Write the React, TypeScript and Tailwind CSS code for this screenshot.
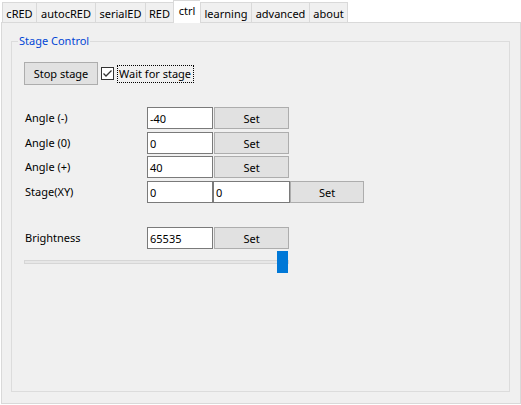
const tabs = [
  { label: "cRED", w: "w-[34px]" },
  { label: "autocRED", w: "w-[59px]" },
  { label: "serialED", w: "w-[50px]" },
  { label: "RED", w: "w-[28px]" },
  { label: "ctrl", w: "w-[27px]", active: true },
  { label: "learning", w: "w-[51px]" },
  { label: "advanced", w: "w-[58px]" },
  { label: "about", w: "w-[39px]", last: true },
];

const Field = ({ value, w = "w-[66px]" }: { value: string; w?: string }) => (
  <div className={`${w} h-[22px] bg-white border border-[#7a7a7a] pl-[2px] flex items-center leading-none`}>
    {value}
  </div>
);

const SetButton = ({ w = "w-[75px]", className = "" }: { w?: string; className?: string }) => (
  <div
    className={`${w} h-[22px] bg-[#e1e1e1] border border-[#adadad] flex items-center justify-center leading-none ${className}`}
  >
    Set
  </div>
);

const Row = ({ label, value, className = "" }: { label: string; value: string; className?: string }) => (
  <div className={`flex items-center h-[22px] ${className}`}>
    <div className="w-[123px] pl-[1px]">{label}</div>
    <Field value={value} />
    <SetButton className="ml-[1px]" />
  </div>
);

export default function App() {
  return (
    <div className="w-[521px] h-[405px] bg-white text-black text-[11px] font-['Noto_Sans',sans-serif] flex flex-col">
      {/* tab strip */}
      <div className="flex items-end h-[22px] pl-[2px]">
        {tabs.map((t) =>
          t.active ? (
            <div
              key={t.label}
              className={`${t.w} h-[23px] -mb-px z-10 bg-white border-l border-t border-[#d9d9d9] flex justify-center pt-[2px] leading-[16px]`}
            >
              {t.label}
            </div>
          ) : (
            <div
              key={t.label}
              className={`${t.w} h-[20px] bg-[#f0f0f0] border-l border-t border-[#d9d9d9] ${
                t.last ? "border-r" : ""
              } flex justify-center pt-[3px] leading-[16px]`}
            >
              {t.label}
            </div>
          )
        )}
      </div>

      {/* tab page */}
      <div className="ml-[1px] w-[520px] h-[382px] bg-[#f0f0f0] border border-[#d9d9d9]">
        <div className="relative ml-[9px] mt-[18px] w-[499px] h-[351px] border border-[#dcdcdc] pl-[12px] pt-[20px]">
          <span className="absolute left-[6px] top-[-9px] px-[1px] bg-[#f0f0f0] text-[#0046d5] leading-[16px]">
            Stage Control
          </span>

          <div className="flex items-center h-[23px]">
            <div className="w-[74px] h-[23px] bg-[#e1e1e1] border border-[#adadad] flex items-center justify-center leading-none">
              Stop stage
            </div>
            <div className="ml-[3px] w-[13px] h-[13px] bg-white border border-[#333333] flex items-center justify-center">
              <svg width="11" height="11" viewBox="0 0 11 11">
                <path d="M1.5 5.5 L4 8 L9.5 2.5" fill="none" stroke="#333333" strokeWidth="1.3" />
              </svg>
            </div>
            <div className="ml-[3px] w-[77px] h-[18px] border border-dotted border-black pl-[1px] flex items-center leading-none">
              Wait for stage
            </div>
          </div>

          <Row label="Angle (-)" value="-40" className="mt-[22px]" />
          <Row label="Angle (0)" value="0" className="mt-[3px]" />
          <Row label="Angle (+)" value="40" className="mt-[2px]" />
          <div className="flex items-center h-[22px] mt-[3px]">
            <div className="w-[123px] pl-[1px]">Stage(XY)</div>
            <Field value="0" />
            <Field value="0" w="w-[77px]" />
            <SetButton w="w-[74px]" />
          </div>

          <Row label="Brightness" value="65535" className="mt-[24px]" />

          <div className="relative mt-[2px] w-[265px] h-[22px] flex items-center">
            <div className="w-full h-[4px] bg-[#e7e7e7] border border-[#d6d6d6]" />
            <div className="absolute right-[1px] top-0 w-[11px] h-[22px] bg-[#0078d7]" />
          </div>
        </div>
      </div>
    </div>
  );
}
